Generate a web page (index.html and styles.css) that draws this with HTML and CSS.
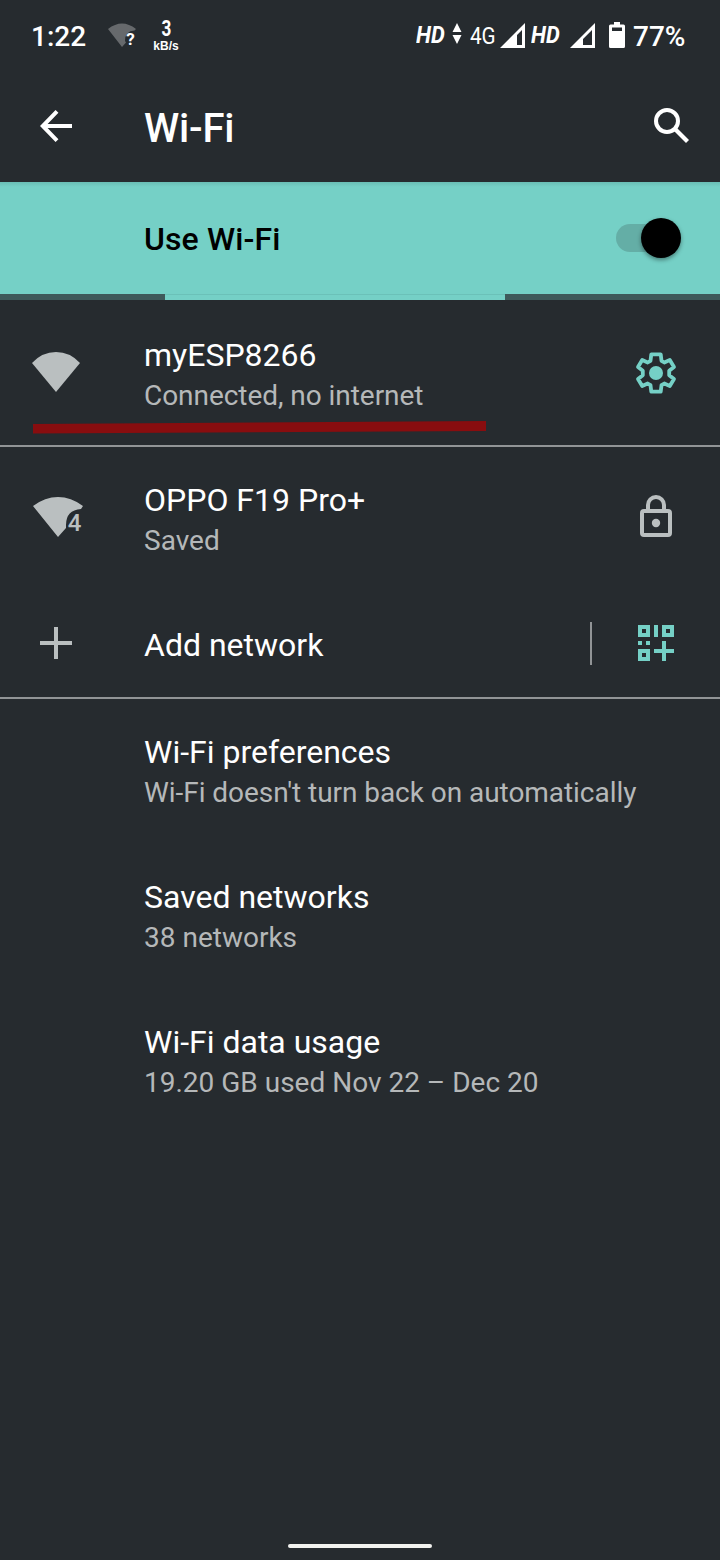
FILE: index.html
```html
<!DOCTYPE html>
<html lang="en">
<head>
<meta charset="utf-8">
<title>Wi-Fi</title>
<link rel="stylesheet" href="styles.css">
</head>
<body>
<div class="screen">
  <header class="status">
    <span class="clock">1:22</span>
    <svg class="status-wifi" width="30" height="28" viewBox="0 0 30 28">
      <path fill="#66696c" d="M0 6Q14-5 28 6L26.500 7.500Q17 8 17 18L18 19.500L14 24Z"/>
      <text class="wifi-mark" x="18.300" y="22.300">?</text>
    </svg>
    <span class="speed"><b class="speed-num">3</b><b class="speed-unit">kB/s</b></span>
    <span class="spacer"></span>
    <span class="hd">HD</span>
    <svg class="updown" width="10" height="22" viewBox="0 0 10 22"><path fill="#fff" d="M5 0L9.500 9H.5ZM.5 12H9.500L5 21Z"/></svg>
    <span class="net">4G</span>
    <svg class="signal" width="25" height="25" viewBox="0 0 25 25"><path fill="#fff" fill-rule="evenodd" d="M25 0V25H0ZM22 7L17 12V22H22Z"/></svg>
    <span class="hd hd-two">HD</span>
    <svg class="signal signal-two" width="25" height="25" viewBox="0 0 25 25"><path fill="#fff" fill-rule="evenodd" d="M25 0V25H0ZM22 7L13 16V22H22Z"/></svg>
    <svg class="battery" width="16" height="26" viewBox="0 0 16 26"><path fill="#fff" fill-rule="evenodd" d="M5 0H11V2.500H14.500Q16 2.500 16 4V24.500Q16 26 14.500 26H1.500Q0 26 0 24.500V4Q0 2.500 1.500 2.500H5ZM3 5.500V9H13V5.500Z"/></svg>
    <span class="percent">77%</span>
  </header>

  <div class="appbar">
    <svg class="back" width="32" height="32" viewBox="0 0 32 32"><path fill="none" stroke="#fff" stroke-width="4" d="M32 16H4M17 1.400L2.800 16L17 30.600"/></svg>
    <h1 class="heading">Wi-Fi</h1>
    <svg class="search" width="36" height="36" viewBox="0 0 36 36"><circle cx="13" cy="13" r="11" fill="none" stroke="#fff" stroke-width="4"/><path stroke="#fff" stroke-width="4.200" d="M20.500 20.500L33.500 33.500"/></svg>
  </div>

  <div class="banner">
    <span class="banner-label">Use Wi-Fi</span>
    <span class="switch"><span class="thumb"></span></span>
  </div>
  <div class="progress"><div class="progress-value"></div></div>

  <main>
    <section class="row divided">
      <div class="lead">
        <svg class="wifi" width="48" height="40" viewBox="0 0 48 40"><path fill="#babfc0" d="M0 11Q10 0 24 0T48 11L24 40Z"/></svg>
      </div>
      <div class="text"><div class="title">myESP8266</div><div class="summary tight">Connected, no internet</div></div>
      <div class="trail">
        <svg width="48" height="48" viewBox="-24 -24 48 48"><path fill="none" stroke="#75d0c6" stroke-width="3.800" stroke-linejoin="round" d="M-4.700-18.700H4.700L5.500-12.200L8.300-10.500L13.800-13L18-6L13.200-2.200V2.200L18 6L13.800 13L8.300 10.500L5.500 12.200L4.700 18.700H-4.700L-5.500 12.200L-8.300 10.500L-13.800 13L-18 6L-13.200 2.200V-2.200L-18-6L-13.800-13L-8.300-10.500L-5.500-12.200Z"/><circle r="7" fill="#75d0c6"/></svg>
      </div>
      <svg class="underline" width="454" height="13" viewBox="0 0 454 13"><path fill="#880d0f" d="M0 3L453 0V10L0 12.600Z"/></svg>
    </section>

    <section class="row">
      <div class="lead">
        <svg class="wifi wifi-four" width="52" height="42" viewBox="0 0 52 42"><path fill="#babfc0" d="M0 9Q12 0 25 0T50 9L48 12Q33 13 33 28V31L25 40Z"/><text class="four" x="34.700" y="34">4</text></svg>
      </div>
      <div class="text"><div class="title">OPPO F19 Pro+</div><div class="summary">Saved</div></div>
      <div class="trail">
        <svg class="lock" width="32" height="42" viewBox="0 0 32 42"><g fill="none" stroke="#babfc0" stroke-width="4"><rect x="2" y="16" width="28" height="24" rx="2"/><path d="M8 16V10A8 8 0 0 1 24 10V16"/></g><circle cx="16" cy="28" r="4.200" fill="#babfc0"/></svg>
      </div>
    </section>

    <section class="row add divided">
      <div class="lead"><svg class="plus" width="32" height="32" viewBox="0 0 32 32"><path stroke="#babfc0" stroke-width="4" d="M0 16H32M16 0V32"/></svg></div>
      <div class="text"><div class="title">Add network</div></div>
      <div class="trail bordered">
        <svg class="qr" width="36" height="36" viewBox="0 0 36 36"><path fill="#75d0c6" fill-rule="evenodd" d="M0 0H12V12H0ZM4 4V8H8V4ZM16 0H20V12H16ZM24 0H36V12H24ZM28 4V8H32V4ZM0 16H4V20H0ZM8 16H12V20H8ZM0 24H12V36H0ZM4 28V32H8V28ZM24 16H28V24H36V28H28V36H24V28H16V24H24Z"/></svg>
      </div>
    </section>

    <section class="row"><div class="lead"></div><div class="text"><div class="title">Wi-Fi preferences</div><div class="summary tight">Wi-Fi doesn't turn back on automatically</div></div></section>
    <section class="row"><div class="lead"></div><div class="text"><div class="title">Saved networks</div><div class="summary">38 networks</div></div></section>
    <section class="row"><div class="lead"></div><div class="text"><div class="title">Wi-Fi data usage</div><div class="summary">19.20 GB used Nov 22 – Dec 20</div></div></section>
  </main>
  <footer class="nav"><div class="handle"></div></footer>
</div>
</body>
</html>
```
FILE: styles.css
```css
* { box-sizing: border-box; }
body {
  margin: 0;
  background: #262b2f;
  color: #fff;
  font-family: Roboto, "Noto Sans", sans-serif;
}
svg { display: block; flex: none; }
.screen { width: 720px; height: 1560px; display: flex; flex-direction: column; overflow: hidden; }
.status { height: 72px; display: flex; align-items: center; padding: 0 35px 0 31px; white-space: nowrap; }
.clock, .percent { font-size: 28px; font-weight: 500; line-height: 33px; }
.clock { width: 77px; }
.status-wifi { margin-top: 2px; }
.wifi-mark { font-size: 17px; font-weight: 700; fill: #fff; }
.speed { width: 28px; margin-left: 14px; display: flex; flex-direction: column; align-items: center; }
.speed-num { font-family: Roboto, sans-serif; font-weight: 700; font-size: 22px; line-height: 20px; transform: translateY(-1px) scaleX(.78); }
.speed-unit { font-family: "Liberation Sans", sans-serif; font-size: 12px; line-height: 13px; }
.spacer { flex: 1; }
.hd { width: 36px; font-size: 23px; font-weight: 700; font-style: italic; transform: scaleX(.95); transform-origin: left; line-height: 28px; }
.updown { margin-right: 8px; margin-top: -5px; }
.net { width: 30px; font-size: 24px; transform: scaleX(.86); transform-origin: left; }
.signal { margin-top: -1px; }
.hd-two { margin-left: 6px; width: 39px; }
.battery { margin: 0 8px 0 14px; position: relative; top: -1px; }
.percent { width: 52px; }
.appbar { height: 110px; display: flex; align-items: center; padding: 0 30px 0 40px; }
.appbar .back { margin-top: -2px; }
.heading { margin: 3px 0 0 72px; flex: 1; font-size: 40px; font-weight: 500; line-height: 47px; letter-spacing: -.2px; }
.appbar .search { margin-top: -2px; }
.banner {
  height: 112px;
  padding: 0 39px 0 144px;
  display: flex;
  align-items: center;
  justify-content: space-between;
  background: linear-gradient(#6abeb5, #75d0c6 5px);
  color: #000;
}
.banner-label { font-size: 32px; font-weight: 500; line-height: 38px; padding-top: 1px; letter-spacing: .1px; }
.switch { width: 65px; height: 28px; background: linear-gradient(#64aea6, #64aea6) 0 0 / 45px 28px no-repeat; border-radius: 14px; display: flex; justify-content: flex-end; align-items: center; }
.thumb { width: 40px; height: 40px; border-radius: 50%; background: #000; box-shadow: 0 2px 4px #0006; flex: none; }
.progress { height: 6px; background: #3e595a; padding-left: 165px; }
.progress-value { width: 339.500px; height: 6px; background: #75d0c6; border-top: 1px solid #6bc1b8; }
.row { height: 145px; display: flex; position: relative; }
.divided { box-shadow: 0 2px #919496; }
.lead { width: 112px; display: flex; align-items: center; justify-content: center; }
.wifi { margin-bottom: 1px; }
.wifi-four { margin: 0 0 0 6px; }
.four { font-size: 24px; font-weight: 500; fill: #babfc0; }
.text { flex: 1; padding: 36px 0 0 32px; white-space: nowrap; }
.title { font-size: 32px; line-height: 38px; }
.summary { margin-top: 5px; font-size: 28px; line-height: 33px; color: #b5b8b9; }
.tight { letter-spacing: -.05px; }
.trail { width: 128px; display: flex; align-items: center; justify-content: center; }
.lock { margin-bottom: 3px; }
.plus, .qr { margin-bottom: 2px; }
.underline { position: absolute; left: 33px; top: 121px; }
.add { height: 107px; }
.bordered { width: 130px; height: 43px; margin-top: 32px; border-left: 2px solid #919496; }
.nav { margin-top: auto; height: 16px; display: flex; justify-content: center; }
.handle { width: 144px; height: 4px; border-radius: 2px; background: #f2f3ef; }
```
